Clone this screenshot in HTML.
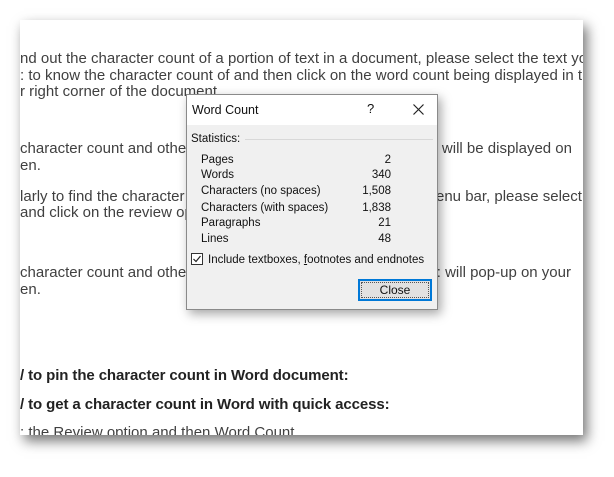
<!DOCTYPE html>
<html><head><style>
*{margin:0;padding:0;box-sizing:border-box}
body{width:614px;height:477px;background:#fff;position:relative;overflow:hidden}
.page{position:absolute;left:20px;top:20px;width:563px;height:415px;background:#fff;box-shadow:4px 6px 12px rgba(0,0,0,.55);overflow:hidden}
.l{position:absolute;left:0;white-space:nowrap;font-family:"Liberation Sans",Arial,sans-serif;font-size:15px;color:#404040;line-height:17px;letter-spacing:0.01px}
.rt{position:absolute;white-space:nowrap;font-family:"Liberation Sans",Arial,sans-serif;font-size:15px;color:#404040;line-height:17px}
.b{font-weight:bold;color:#222;letter-spacing:-0.1px}
.dlg{position:absolute;left:186px;top:94px;width:252px;height:216px;background:#f0f0f0;border:1px solid #8a8a8a;box-shadow:3px 4px 10px rgba(0,0,0,.35);font-family:"Liberation Sans",sans-serif;font-size:11.5px;color:#111}
.tb{position:absolute;left:0;top:0;right:0;height:30px;background:#fff}
.d{position:absolute;white-space:nowrap;line-height:14px}
.r{position:absolute;right:46px;text-align:right}
</style></head><body>
<div class="page">
<div class="l" style="top:30px">nd out the character count of a portion of text in a document, please select the text you</div>
<div class="l" style="top:47px">: to know the character count of and then click on the word count being displayed in the</div>
<div class="l" style="top:63px">r right corner of the document.</div>
<div class="l" style="top:120px">character count and other</div>
<div class="rt" style="top:120px;right:11px">: will be displayed on</div>
<div class="l" style="top:137px">en.</div>
<div class="l" style="top:168px">larly to find the character count</div>
<div class="rt" style="top:168px;left:416px">enu bar, please select</div>
<div class="l" style="top:184px">and click on the review option.</div>
<div class="l" style="top:244px">character count and other</div>
<div class="rt" style="top:244px;right:12px">: will pop-up on your</div>
<div class="l" style="top:261px">en.</div>
<div class="l b" style="top:347px">/ to pin the character count in Word document:</div>
<div class="l b" style="top:376px">/ to get a character count in Word with quick access:</div>
<div class="l" style="top:404px">: the Review option and then Word Count</div>
</div>
<div class="dlg">
<div class="tb"></div>
<div class="d" style="left:5px;top:8px;font-size:12.5px">Word Count</div>
<div class="d" style="left:180px;top:7px;font-size:13px">?</div>
<svg style="position:absolute;left:226px;top:9px" width="11" height="11"><path d="M0.5 0.5L10.5 10.5M10.5 0.5L0.5 10.5" stroke="#222" stroke-width="1.2"/></svg>
<div class="d" style="left:4px;top:37px">Statistics:</div>
<div style="position:absolute;left:58px;top:44px;width:188px;border-top:1px solid #d8d8d8"></div>
<div class="d" style="left:14px;top:58px">Pages</div><div class="d r" style="top:58px">2</div>
<div class="d" style="left:14px;top:73px">Words</div><div class="d r" style="top:73px">340</div>
<div class="d" style="left:14px;top:89px">Characters (no spaces)</div><div class="d r" style="top:89px">1,508</div>
<div class="d" style="left:14px;top:106px">Characters (with spaces)</div><div class="d r" style="top:106px">1,838</div>
<div class="d" style="left:14px;top:121px">Paragraphs</div><div class="d r" style="top:121px">21</div>
<div class="d" style="left:14px;top:137px">Lines</div><div class="d r" style="top:137px">48</div>
<div style="position:absolute;left:4px;top:158px;width:12px;height:12px;border:1px solid #333;background:#fff"></div>
<svg style="position:absolute;left:5px;top:159px" width="10" height="10"><path d="M1.5 5L4 7.5L8.5 2" stroke="#222" stroke-width="1.2" fill="none"/></svg>
<div class="d" style="left:21px;top:158px">Include textboxes, <u>f</u>ootnotes and endnotes</div>
<div style="position:absolute;left:171px;top:184px;width:74px;height:22px;border:2px solid #0078d7;background:#e1e1e1"><div style="position:absolute;inset:1px;border:1px dotted #555;text-align:center;line-height:15px;font-size:12px">Close</div></div>
</div>
</body></html>
